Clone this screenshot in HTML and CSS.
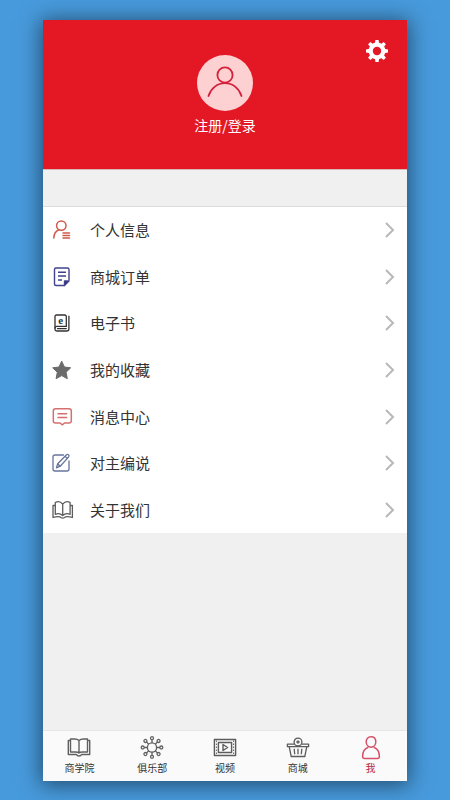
FILE: index.html
```html
<!DOCTYPE html>
<html lang="zh-CN">
<head>
<meta charset="utf-8">
<meta name="viewport" content="width=device-width, initial-scale=1">
<title>我</title>
<link rel="stylesheet" href="styles.css">
</head>
<body>
<div class="app">
  <header class="profile">
    <button class="settings" type="button" aria-label="设置">
      <svg viewBox="0 0 24 24" width="24" height="24">
        <g fill="#fff">
          <g id="teeth">
            <path d="M9.800 5 10.400 1h3.200L14.200 5zM9.800 19l.6 4h3.200l.6-4z"/>
            <path d="M5 9.800 1 10.400v3.200L5 14.200zM19 9.800l4 .6v3.200l-4 .6z"/>
          </g>
          <use href="#teeth" transform="rotate(45 12 12)"/>
        </g>
        <circle cx="12" cy="12" r="6.300" fill="none" stroke="#fff" stroke-width="4.200"/>
      </svg>
    </button>
    <a class="login" href="#login">
      <span class="avatar">
        <svg viewBox="0 0 56 56" width="56" height="56" fill="none" stroke="#d4213b" stroke-width="1.8" stroke-linecap="round">
          <circle cx="28" cy="20" r="7.6"/>
          <path d="M11.5 41C14 33 20.5 28.2 28 28.2S42 33 44.500 41"/>
        </svg>
      </span>
      <span>注册/登录</span>
    </a>
  </header>

  <nav class="menu" aria-label="个人中心">
    <a class="row" href="#info">
      <svg class="icon" viewBox="0 0 24 24" fill="none" stroke="#cf5a4c" stroke-width="1.5" stroke-linecap="round">
        <circle cx="11.300" cy="7.600" r="4.700"/>
        <path d="M3.800 20c.2-4.200 2-6.900 5-8.200M13 15h6.500M13 17.500h6.500M13 20h6.500"/>
      </svg>
      <span class="label">个人信息</span>
      <svg class="chevron" viewBox="0 0 10 16"><path d="m1 1 7 7-7 7"/></svg>
    </a>
    <a class="row" href="#orders">
      <svg class="icon" viewBox="0 0 24 24" fill="none" stroke="#42428c" stroke-width="1.4" stroke-linejoin="round">
        <path d="M19 15.500V4.500Q19 3 17.500 3H6Q4.500 3 4.500 4.500v14.500q0 1.500 1.500 1.500h8.500"/>
        <path d="M8 7.200h8M8 11h8M8 15h4"/>
        <path d="M14.500 20.500v-4.500H19z" fill="#29297b"/>
      </svg>
      <span class="label">商城订单</span>
      <svg class="chevron" viewBox="0 0 10 16"><path d="m1 1 7 7-7 7"/></svg>
    </a>
    <a class="row" href="#ebooks">
      <svg class="icon" viewBox="0 0 24 24" fill="none" stroke="#333" stroke-width="1.3" stroke-linecap="round">
        <path d="M16.300 15.300V5.500Q16.300 4 14.800 4H6.500Q5 4 5 5.500v12.700Q5 20 6.800 20h10q2.100 0 2.100-2.100V5.200"/>
        <path d="M16.300 15.300H6.800Q5 15.300 5 17M7.500 17.600h8.800"/>
        <text class="e-mark" x="10.700" y="12.800" text-anchor="middle">e</text>
      </svg>
      <span class="label">电子书</span>
      <svg class="chevron" viewBox="0 0 10 16"><path d="m1 1 7 7-7 7"/></svg>
    </a>
    <a class="row" href="#favorites">
      <svg class="icon" viewBox="0 0 24 24" fill="#6b6b6b" stroke="#6b6b6b" stroke-linejoin="round">
        <path d="m11.700 3.200 2.700 5.800 6.300.8-4.600 4.400 1.200 6.500-5.600-3.100-5.600 3.100 1.200-6.500L2.700 9.800 9 9z"/>
      </svg>
      <span class="label">我的收藏</span>
      <svg class="chevron" viewBox="0 0 10 16"><path d="m1 1 7 7-7 7"/></svg>
    </a>
    <a class="row" href="#messages">
      <svg class="icon" viewBox="0 0 24 24" fill="none" stroke="#d4706e" stroke-width="1.500" stroke-linecap="round" stroke-linejoin="round">
        <path d="M5.500 3.700h13.500q2.300 0 2.300 2.300v9.700q0 2.300-2.300 2.300H14.500l-2.200 1.800-2.200-1.800H5.500q-2.200 0-2.200-2.300V6Q3.300 3.700 5.500 3.700zM8 8.800h8.600M8 12.600h8.600"/>
      </svg>
      <span class="label">消息中心</span>
      <svg class="chevron" viewBox="0 0 10 16"><path d="m1 1 7 7-7 7"/></svg>
    </a>
    <a class="row" href="#editor">
      <svg class="icon" viewBox="0 0 24 24" fill="none" stroke="#66759c" stroke-width="1.300" stroke-linecap="round" stroke-linejoin="round">
        <path d="M13.500 4H5Q3 4 3 6v12q0 2 2 2h12q2 0 2-2v-8"/>
        <path d="m6.500 16.800 1.200-4L16.500 3.700q1-.8 2 .1t.2 2.100l-8.500 9.300zM7.700 12.800l2.500 2.400M15 5.300l2.400 2.300"/>
      </svg>
      <span class="label">对主编说</span>
      <svg class="chevron" viewBox="0 0 10 16"><path d="m1 1 7 7-7 7"/></svg>
    </a>
    <a class="row" href="#about">
      <svg class="icon" viewBox="0 0 24 24" fill="none" stroke="#5c5c5c" stroke-width="1.300" stroke-linejoin="round">
        <path d="M12.700 6.200Q9.500 2 5.300 4.500v11.800q4.200-1.800 7.400 1.200 3.200-3 7.400-1.200V4.500Q15.900 2 12.700 6.200zM12.700 6.200v11.300"/>
        <path d="M5.300 7.500H3v12q4-1.300 7-.6 1 1.200 2.700 1.200t2.700-1.200q3-.7 7 .6v-12h-2.300"/>
      </svg>
      <span class="label">关于我们</span>
      <svg class="chevron" viewBox="0 0 10 16"><path d="m1 1 7 7-7 7"/></svg>
    </a>
  </nav>

  <nav class="tabs" aria-label="主导航">
    <a class="tab" href="#school">
      <svg class="icon" viewBox="0 0 24 24" fill="none" stroke="#606060" stroke-width="1.400" stroke-linejoin="round">
        <path d="M12 4.500Q10.500 3 7.500 3H3.500v13h5Q11 16 12 17q1-1 3.500-1h5V3h-4Q13.500 3 12 4.500zM12 4.500V17"/>
        <path d="M3.500 4.500H1.300v14H9.500q.5 1.500 2.500 1.500t2.500-1.500h8.200v-14h-2.200"/>
      </svg>
      <span>商学院</span>
    </a>
    <a class="tab" href="#club">
      <svg class="icon" viewBox="0 0 24 24" fill="none" stroke="#606060" stroke-width="1.300">
        <circle cx="12" cy="11.500" r="4.600"/>
        <g id="spokes">
          <path d="M12 6.900V3.600M12 16.100v3.300M7.400 11.500H4.100M16.600 11.500h3.300"/>
          <circle cx="12" cy="2.200" r="1.500"/><circle cx="12" cy="20.800" r="1.500"/>
          <circle cx="2.700" cy="11.500" r="1.500"/><circle cx="21.300" cy="11.500" r="1.500"/>
        </g>
        <use href="#spokes" transform="rotate(45 12 11.500)"/>
      </svg>
      <span>俱乐部</span>
    </a>
    <a class="tab" href="#video">
      <svg class="icon" viewBox="0 0 24 24" fill="none" stroke="#5c5c5c" stroke-width="1.400" stroke-linejoin="round">
        <path d="M1.400 3.500h21.200v16H1.400zM5.400 6.500h13.200v10H5.400z"/>
        <path d="m10 8.500 4.600 3-4.600 3z"/>
        <path d="M3.400 4.500v14M20.600 4.500v14" stroke-width="1" stroke-dasharray="1.500 1.500"/>
      </svg>
      <span>视频</span>
    </a>
    <a class="tab" href="#shop">
      <svg class="icon" viewBox="0 0 24 24" fill="none" stroke="#5c5c5c" stroke-width="1.300" stroke-linejoin="round">
        <path d="M8.500 8.200H1.400v2.500h21.200V8.200h-7.100M3.200 10.700l2 9.800h13.600l2-9.800M8.200 12.800l.5 5.500M12 12.800v5.500M15.800 12.800l-.5 5.500"/>
        <circle cx="12" cy="6" r="3.900"/>
        <path d="M12 4.300v3.400M10.300 6h3.400"/>
      </svg>
      <span>商城</span>
    </a>
    <a class="tab active" href="#me" aria-current="page">
      <svg class="icon" viewBox="0 0 24 24" fill="none" stroke="#d4526a" stroke-width="1.500" stroke-linejoin="round">
        <path d="M12 .8c3 0 4.800 2.200 4.800 5S14.900 11.200 12 11.200 7.200 8.600 7.200 5.800 9 .8 12 .8z"/>
        <path d="M9.300 11.200C5.700 12.400 3.600 16 3.600 20.500q0 2 2 2h12.800q2 0 2-2c0-4.500-2.100-8.100-5.700-9.300"/>
      </svg>
      <span>我</span>
    </a>
  </nav>
</div>
</body>
</html>
```
FILE: styles.css
```css
* {
  box-sizing: border-box;
}

body {
  margin: 0;
  padding: 20px 43px 19px;
  min-height: 100vh;
  display: flex;
  background: #479adc;
  color: #333;
  font-family: "Noto Sans CJK SC", sans-serif;
}

a {
  color: inherit;
  text-decoration: none;
}

svg {
  display: block;
  flex: none;
}

.app {
  flex: 1;
  display: flex;
  flex-direction: column;
  background: #f0f0f0;
  box-shadow: 0 2px 20px 2px rgba(0, 0, 0, 0.5);
}

.profile {
  position: relative;
  display: flex;
  justify-content: center;
  padding: 35px 16px 34px;
  background: #e41824;
  border-bottom: 1px solid #d9b8b8;
}

.settings {
  position: absolute;
  top: 19px;
  right: 18px;
  padding: 0;
  border: 0;
  background: none;
  cursor: pointer;
}

.login {
  display: flex;
  flex-direction: column;
  align-items: center;
  gap: 4px;
  color: #fff;
  font-size: 14px;
  line-height: 20px;
}

.avatar {
  border-radius: 50%;
  background: #fdd0d2;
}

.menu {
  display: grid;
  grid-auto-rows: 1fr;
  min-height: 327px;
  margin-top: 36px;
  border-top: 1px solid #dcdcdc;
  background: #fff;
}

.row {
  display: flex;
  align-items: center;
  gap: 16px;
  padding: 0 12px 0 7px;
  font-size: 15px;
  line-height: 22px;
}

.label {
  flex: 1;
}

.icon {
  width: 24px;
  height: 24px;
}

.e-mark {
  fill: #333;
  stroke: none;
  font: bold 11px "Liberation Serif", serif;
}

.chevron {
  width: 10px;
  height: 16px;
  fill: none;
  stroke: #b8b8b8;
  stroke-width: 2;
}

.tabs {
  display: flex;
  margin-top: auto;
  border-top: 1px solid #e6e6e6;
  background: #fafafa;
}

.tab {
  flex: 1;
  display: flex;
  flex-direction: column;
  align-items: center;
  padding: 5px 0 6px;
  font-size: 10px;
  line-height: 15px;
}

.active {
  color: #b8283c;
}
```
